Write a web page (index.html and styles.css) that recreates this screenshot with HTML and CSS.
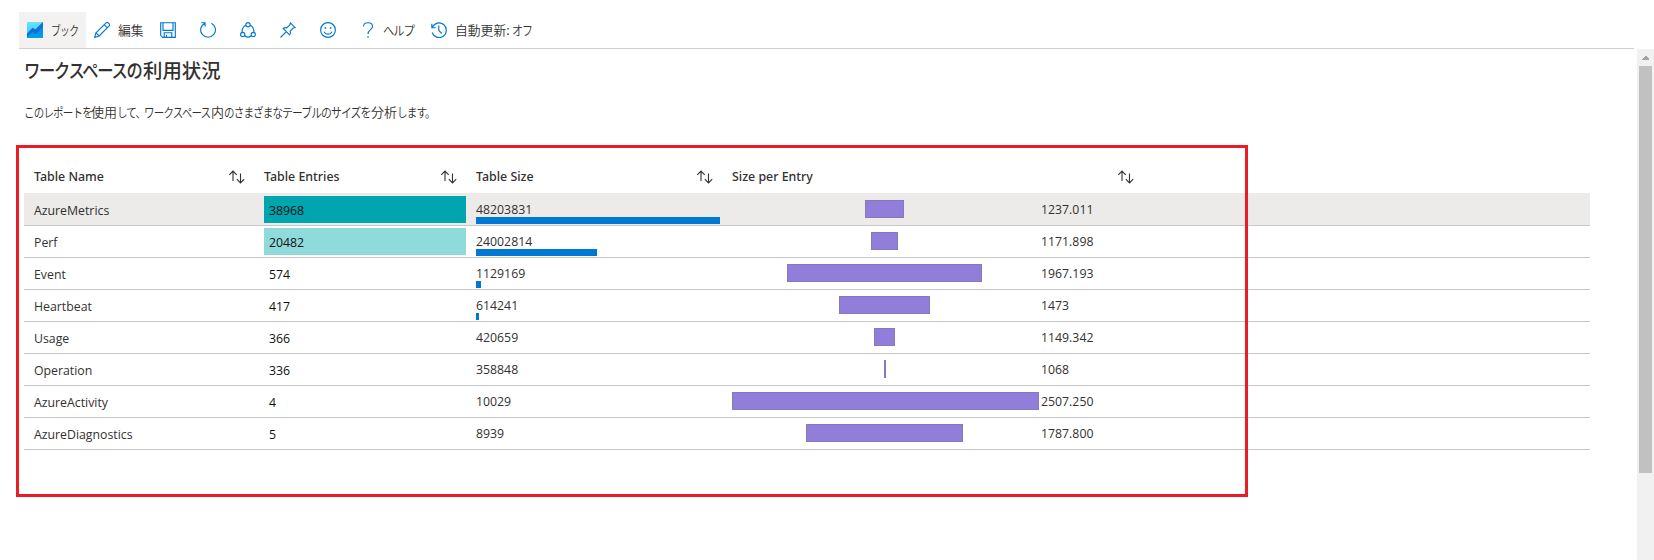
FILE: index.html
```html
<!DOCTYPE html>
<html lang="ja">
<head>
<meta charset="utf-8">
<title>ワークスペースの利用状況</title>
<link rel="stylesheet" href="styles.css">
</head>
<body>
<svg class="defs" width="0" height="0">
  <defs>
    <linearGradient id="sky" x1="0" y1="0" x2="0" y2="1"><stop offset="0" stop-color="#6be5ff"/><stop offset="1" stop-color="#32bdf0"/></linearGradient>
    <linearGradient id="sea" x1="0" y1="0" x2="0" y2="1"><stop offset="0" stop-color="#0a7de0"/><stop offset="1" stop-color="#06a0ea"/></linearGradient>
    <symbol id="sort" viewBox="0 0 16 14"><path d="M4.5 11V1.2M.8 4.8l3.7-3.7 3.7 3.7M12 3.5v9.3M8.3 9.2l3.7 3.7 3.7-3.7"/></symbol>
  </defs>
</svg>
<div class="toolbar">
  <div class="tool active"><svg class="icon book" viewBox="0 0 16 16"><path fill="url(#sky)" d="M0 0h16v16H0z"/><path fill="url(#sea)" d="M0 11.500 5.500 6l3 1.500L16 0v16H0z"/><path fill="#0f6fdc" d="M0 12 5.500 6l3 1.500L16 0v4.500L9 12l-3.500-2L0 15z"/></svg><span class="label"><span class="kana book-label">ブック</span></span></div>
  <div class="tool edit"><svg class="icon" viewBox="0 0 16 16"><path d="M.6 15.4 2 10.8 12.1.9c.7-.6 1.6-.5 2.3.2l.6.6c.6.7.7 1.5.1 2.2L5.2 14 .6 15.4zM10.200 2.700l3.100 3.100M2 10.800 5.200 14"/></svg><span class="label">編集</span></div>
  <div class="tool"><svg class="icon" viewBox="0 0 16 16"><path d="M.7.7h14.600v14.600H2.700l-2-2zM3 .7v7.600h10V.7M4.200 15.200v-4.500h7.600v4.500M6.500 15.200v-2.500"/></svg></div>
  <div class="tool"><svg class="icon" viewBox="0 0 16 16"><path d="M1.2.7h3.900v3.900M4.800 1.200a7.400 7.400 0 1 0 6.500 0"/></svg></div>
  <div class="tool"><svg class="icon" viewBox="0 0 16 16"><circle cx="8" cy="2.7" r="2.1"/><circle cx="2.7" cy="12.4" r="2.1"/><circle cx="13.3" cy="12.4" r="2.1"/><path d="M5.900 3.200C3.500 4.200 2.100 6.800 2 10.300M10.100 3.200c2.400 1 3.800 3.600 3.900 7.100M4.600 13.700c2 1.700 4.800 1.700 6.800 0"/></svg></div>
  <div class="tool"><svg class="icon" viewBox="0 0 16 16"><path d="M10.400.9l4.700 4.700-1.800.4-3.200 3.200c.7 1.800.2 2.800-.6 3.600L3.200 6.500c1-.9 2.100-1.200 3.600-.6L10 2.700zM6.300 9.700.5 15.500"/></svg></div>
  <div class="tool"><svg class="icon" viewBox="0 0 16 16"><circle cx="8" cy="8" r="7.4"/><path d="M4 9.700c1.800 3.300 6.200 3.300 8 0"/><path class="fill" d="M4.600 5.200h1.600v1.600H4.600zM9.800 5.200h1.600v1.600H9.800z"/></svg></div>
  <div class="tool help"><svg class="icon" viewBox="0 0 16 16"><path d="M3.500 4.500C3.500 2 5.300.7 8 .7s4.500 1.400 4.500 3.800C12.500 7.700 8 7.800 8 12M8 14.300V16"/></svg><span class="label"><span class="kana help-label">ヘルプ</span></span></div>
  <div class="tool history"><svg class="icon" viewBox="0 0 16 16"><path d="M.8 1.700v4h4M1.300 5.400A7.300 7.300 0 1 1 1.100 10.500M7.800 3.500v5l3 3"/></svg><span class="label">自動更新: <span class="kana off-label">オフ</span></span></div>
</div>
<div class="viewport">
  <main class="content">
    <h1><span class="kana title-kana">ワークスペースの</span>利用状況</h1>
    <p class="lead"><span class="kana k7">このレポートを</span>使用<span class="kana k3">して、</span><span class="kana k7">ワークスペース</span>内<span class="kana k6">のさまざまな</span><span class="kana k9">テーブルのサイズを</span>分析<span class="kana k4">します。</span></p>
    <div class="grid">
      <div class="row head">
        <div class="name">Table Name<svg class="sort"><use href="#sort"/></svg></div>
        <div class="entries">Table Entries<svg class="sort"><use href="#sort"/></svg></div>
        <div class="size">Table Size<svg class="sort"><use href="#sort"/></svg></div>
        <div class="ratio">Size per Entry<svg class="sort"><use href="#sort"/></svg></div>
      </div>
      <div class="row selected"><div class="name">AzureMetrics</div><div class="entries"><span class="heat high">38968</span></div><div class="size">48203831<i class="bar" style="width:244px"></i></div><div class="ratio"><div class="track"><i style="width:39px"></i></div>1237.011</div></div>
      <div class="row"><div class="name">Perf</div><div class="entries"><span class="heat mid">20482</span></div><div class="size">24002814<i class="bar" style="width:121px"></i></div><div class="ratio"><div class="track"><i style="width:27px"></i></div>1171.898</div></div>
      <div class="row"><div class="name">Event</div><div class="entries"><span class="heat">574</span></div><div class="size">1129169<i class="bar" style="width:5px"></i></div><div class="ratio"><div class="track"><i style="width:195px"></i></div>1967.193</div></div>
      <div class="row"><div class="name">Heartbeat</div><div class="entries"><span class="heat">417</span></div><div class="size">614241<i class="bar" style="width:3px"></i></div><div class="ratio"><div class="track"><i style="width:91px"></i></div>1473</div></div>
      <div class="row"><div class="name">Usage</div><div class="entries"><span class="heat">366</span></div><div class="size">420659</div><div class="ratio"><div class="track"><i style="width:21px"></i></div>1149.342</div></div>
      <div class="row"><div class="name">Operation</div><div class="entries"><span class="heat">336</span></div><div class="size">358848</div><div class="ratio"><div class="track"><i style="width:2px"></i></div>1068</div></div>
      <div class="row"><div class="name">AzureActivity</div><div class="entries"><span class="heat">4</span></div><div class="size">10029</div><div class="ratio"><div class="track"><i style="width:307px"></i></div>2507.250</div></div>
      <div class="row"><div class="name">AzureDiagnostics</div><div class="entries"><span class="heat">5</span></div><div class="size">8939</div><div class="ratio"><div class="track"><i style="width:157px"></i></div>1787.800</div></div>
    </div>
  </main>
  <div class="scrollbar"><svg class="arrow" width="17" height="17" viewBox="0 0 17 17" shape-rendering="crispEdges"><path d="M5 11v-1l3-3h1l3 3v1z"/></svg><div class="thumb"></div></div>
</div>
<div class="highlight"></div>
</body>
</html>
```
FILE: styles.css
```css
* { box-sizing: border-box; }
body {
  margin: 0;
  height: 560px;
  overflow: hidden;
  position: relative;
  background: #fff;
  color: #323130;
  font: 12.3px/18px "Open Sans", "Noto Sans CJK JP", sans-serif;
}
.defs { display: block; height: 0; }
.kana {
  display: inline-block;
  white-space: nowrap;
  letter-spacing: -0.08em;
  transform: scaleX(.81);
  transform-origin: left;
}

/* Toolbar */
.toolbar {
  display: flex;
  height: 49px;
  margin: 0 20px 0 19px;
  padding-top: 12px;
  border-bottom: 1px solid #d2d0ce;
  font-family: "Noto Sans CJK JP", sans-serif;
  font-weight: 350;
  font-size: 12.8px;
}
.tool { display: flex; align-items: center; width: 40px; height: 36px; padding-left: 8px; padding-bottom: 1px; white-space: nowrap; flex: none; }
.tool .label { margin-left: 8px; padding-top: 1px; }
.tool.active { width: 67px; background: #f3f2f1; }
.tool.edit { width: 66px; }
.tool.help { width: 73px; padding-left: 8px; }
.tool.help .label { margin-left: 7px; }
.tool.history { width: auto; padding-left: 7px; margin-left: -1px; }
.icon { width: 16px; height: 16px; fill: none; stroke: #0078d4; stroke-width: 1.15; flex: none; }
.icon.book { stroke: none; }
.icon .fill { fill: #0078d4; stroke: none; }
.book-label { width: 26px; transform: scaleX(.77); }
.help-label { width: 31px; transform: scaleX(.88); }
.off-label { width: 20px; transform: scaleX(.86); }

/* Page body */
.viewport { display: flex; height: 511px; }
.content { flex: 1; padding-left: 24px; }
h1 {
  margin: 7px 0 0;
  font: 500 19.4px/28px "Noto Sans CJK JP", sans-serif;
  height: 28px;
}
.title-kana { width: 119px; transform: scaleX(.84); }
.lead {
  margin: 18px 0 0;
  height: 20px;
  font: 350 13px/20px "Noto Sans CJK JP", sans-serif;
  white-space: nowrap;
}
.k3 { width: 27px; }
.k4 { width: 37px; }
.k6 { width: 58px; }
.k7 { width: 67px; }
.k9 { width: 89px; transform: scaleX(.83); }

/* Table */
.grid { width: 1566px; margin-top: 39px; }
.row {
  display: grid;
  grid-template-columns: 240px 212px 256px 1fr;
  height: 32px;
  border-bottom: 1px solid #c8c8c8;
}
.row.selected { height: 33px; padding-top: 1px; background: #edebe9; }
.name { padding: 8px 0 0 10px; }
.heat { display: block; width: 202px; height: 27px; margin-top: 2px; padding: 6px 0 0 5px; color: #111; }
.heat.high { background: #00a5af; }
.heat.mid { background: #8fdadb; }
.size { display: flex; flex-direction: column; padding-top: 7px; }
.bar { display: block; height: 7px; margin-top: -2px; background: #0078d4; }
.ratio { display: flex; padding-top: 7px; }
.track { display: flex; justify-content: safe center; width: 307px; margin: -1px 2px 0 0; padding-right: 2px; }
.track i { flex: none; height: 18px; background: #917edb; border: 1px solid #8878bc; }
.row.head {
  border: 0;
  font-family: "Noto Sans", "Open Sans", sans-serif;
  font-weight: 500;
  font-size: 12.4px;
}
.head > div { display: flex; flex-direction: row; align-items: flex-start; justify-content: space-between; padding-top: 7px; }
.head .name { padding-right: 19px; }
.head .entries { padding-right: 19px; }
.head .size { padding-right: 19px; }
.head .ratio { width: 402px; }
.sort { width: 17px; height: 14px; margin-top: 2px; fill: none; stroke: #323130; stroke-width: 1.1; }

/* Scrollbar */
.scrollbar { width: 17px; background: #f1f1f1; padding-left: 2px; }
.arrow { display: block; margin-left: -2px; fill: #a3a3a3; }
.thumb { width: 13px; height: 407px; background: #c1c1c1; }

/* Callout frame over the table */
.highlight {
  position: absolute;
  left: 16px;
  top: 145px;
  width: 1232px;
  height: 352px;
  border: 3px solid #ed1c24;
}
```
